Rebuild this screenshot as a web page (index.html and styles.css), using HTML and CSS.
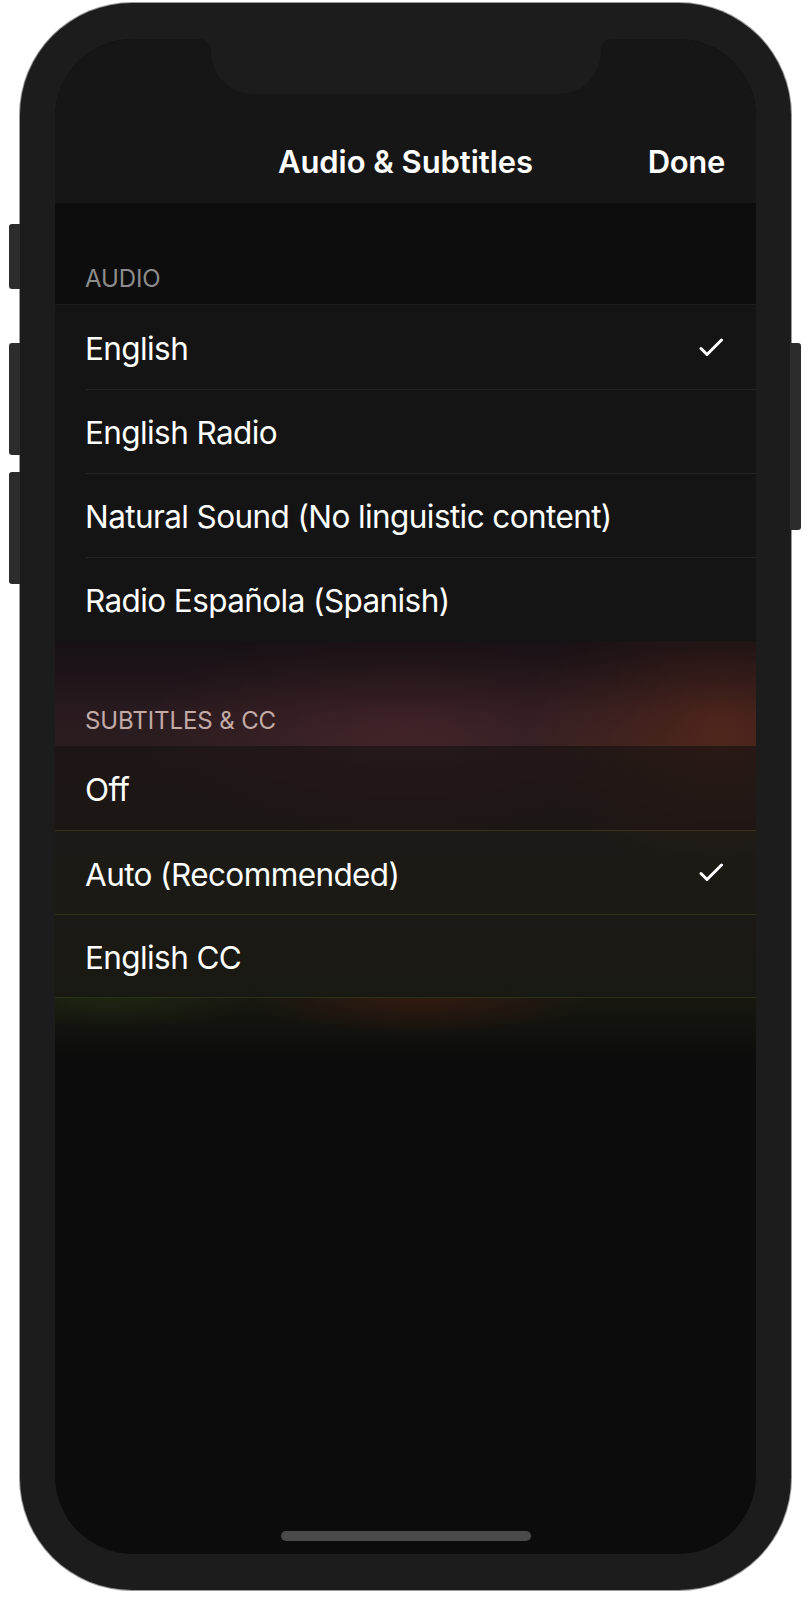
FILE: index.html
```html
<!DOCTYPE html>
<html lang="en">
<head>
<meta charset="utf-8">
<title>Audio &amp; Subtitles</title>
<link rel="stylesheet" href="styles.css">
</head>
<body>
<div class="device">
  <span class="btn btn-mute"></span>
  <span class="btn btn-volup"></span>
  <span class="btn btn-voldown"></span>
  <span class="btn btn-power"></span>
  <div class="screen">
    <div class="notch"></div>
    <header class="nav">
      <div class="nav-bar">
        <span class="nav-title">Audio &amp; Subtitles</span>
        <span class="nav-done">Done</span>
      </div>
    </header>

    <section class="group group-audio">
      <div class="group-header"><span>AUDIO</span></div>
      <ul class="list">
        <li class="row"><span class="label">English</span><svg class="check" viewBox="0 0 24 19" width="24" height="19"><path d="M2 10.5 L8 16.5 L22.5 2" fill="none" stroke="#fff" stroke-width="3" stroke-linecap="round" stroke-linejoin="round"/></svg></li>
        <li class="row"><span class="label">English Radio</span></li>
        <li class="row"><span class="label">Natural Sound (No linguistic content)</span></li>
        <li class="row"><span class="label">Radio Española (Spanish)</span></li>
      </ul>
    </section>

    <section class="group group-subs">
      <div class="group-header"><span>SUBTITLES &amp; CC</span></div>
      <ul class="list">
        <li class="row row-off"><span class="label">Off</span></li>
        <li class="row row-auto"><span class="label">Auto (Recommended)</span><svg class="check" viewBox="0 0 24 19" width="24" height="19"><path d="M2 10.5 L8 16.5 L22.5 2" fill="none" stroke="#fff" stroke-width="3" stroke-linecap="round" stroke-linejoin="round"/></svg></li>
        <li class="row row-cc"><span class="label">English CC</span></li>
      </ul>
    </section>
    <div class="glow"></div>

    <div class="spacer"></div>
    <div class="home-bar"><span class="home-indicator"></span></div>
  </div>
</div>
</body>
</html>
```

FILE: styles.css
```css
* { box-sizing: border-box; }
html, body { margin: 0; padding: 0; background: #ffffff; }
body {
  font-family: Inter, "Noto Sans", "Liberation Sans", sans-serif;
  color: #ffffff;
  width: 810px;
  height: 1600px;
  overflow: hidden;
}

.device {
  position: relative;
  margin: 3px 0 0 19.5px;
  width: 771px;
  height: 1587px;
  border-radius: 112px;
  background: #1c1c1c;
  box-shadow: 0 0 0 1px #9a9a9a;
  padding: 36px 35px 36px 35.5px;
}

.btn {
  position: absolute;
  background: #2c2c2c;
  width: 11px;
}
.btn-mute   { left: -10.5px; top: 221px; height: 65px; border-radius: 3px 0 0 3px; }
.btn-volup  { left: -10.5px; top: 340px; height: 112px; border-radius: 3px 0 0 3px; }
.btn-voldown{ left: -10.5px; top: 469px; height: 112px; border-radius: 3px 0 0 3px; }
.btn-power  { right: -10.5px; top: 340px; height: 187px; border-radius: 0 3px 3px 0; }

.screen {
  position: relative;
  width: 701px;
  height: 1515px;
  border-radius: 78px;
  overflow: hidden;
  background: #0c0c0c;
  display: flex;
  flex-direction: column;
}

.notch {
  position: absolute;
  top: 0;
  left: 156px;
  width: 390px;
  height: 55px;
  background: #1c1c1c;
  border-radius: 0 0 42px 42px;
  z-index: 2;
}
.notch::before, .notch::after {
  content: "";
  position: absolute;
  top: 0;
  width: 10px;
  height: 10px;
}
.notch::before {
  left: -10px;
  background: radial-gradient(circle at 0 100%, transparent 9.5px, #1c1c1c 10px);
}
.notch::after {
  right: -10px;
  background: radial-gradient(circle at 100% 100%, transparent 9.5px, #1c1c1c 10px);
}

.nav {
  background: #161616;
  height: 164px;
  padding-top: 82px;
  flex: none;
}
.nav-bar {
  position: relative;
  height: 80px;
  display: flex;
  align-items: center;
  justify-content: center;
  font-weight: 600;
  font-size: 31px;
  letter-spacing: -0.05px;
}
.nav-done {
  position: absolute;
  right: 31px;
  top: 50%;
  transform: translateY(-50%);
  letter-spacing: -0.3px;
}

.group { flex: none; }
.group-header {
  height: 102px;
  display: flex;
  align-items: flex-end;
  padding: 0 0 13px 30px;
  font-size: 24px;
  line-height: 24px;
  letter-spacing: -0.1px;
  color: #8c8c8c;
  background: #0d0d0d;
  border-bottom: 1px solid #1d1d1d;
}
.list { list-style: none; margin: 0; padding: 0; }
.row {
  position: relative;
  height: 84px;
  display: flex;
  align-items: center;
  justify-content: space-between;
  padding: 3px 33px 0 30px;
  font-size: 31.5px;
  letter-spacing: -0.6px;
  background: #141414;
}
.group-audio .row + .row::before {
  content: "";
  position: absolute;
  top: 0;
  left: 31px;
  right: 0;
  height: 1px;
  background: #232323;
}
.check { flex: none; margin-top: -3px; }

.group-subs {
  background:
    radial-gradient(ellipse 40% 60% at 95% 22%, rgba(120, 50, 25, 0.55), transparent 70%),
    radial-gradient(ellipse 50% 40% at 50% 25%, rgba(95, 45, 50, 0.5), transparent 75%),
    linear-gradient(180deg, #1a1418 0%, #2e1d22 20%, #241c1b 40%, #1d1b17 70%, #1b1a15 100%);
}
.group-subs .group-header {
  height: 105px;
  background:
    linear-gradient(180deg, rgba(20, 14, 18, 0.55) 0%, rgba(0, 0, 0, 0) 100%);
  border-bottom: none;
  color: #c2aaa6;
}
.group-subs .row { background: transparent; }
.row-off  { background: rgba(26, 20, 19, 0.7) !important; }
.row-auto { background: rgba(26, 25, 20, 0.55) !important; border-top: 1px solid #3a3019; }
.row-cc   { background: rgba(25, 25, 20, 0.6) !important; border-top: 1px solid #2e3219; border-bottom: 1px solid #2a3117; }

.glow {
  flex: none;
  height: 60px;
  background:
    radial-gradient(ellipse 30% 80% at 52% 0%, rgba(70, 28, 16, 0.55), transparent 80%),
    radial-gradient(ellipse 25% 70% at 8% 0%, rgba(35, 48, 18, 0.55), transparent 80%),
    linear-gradient(180deg, #181810 0%, #0c0c0c 100%);
}

.spacer { flex: 1; }
.home-bar {
  flex: none;
  height: 40px;
  display: flex;
  justify-content: center;
}
.home-indicator {
  width: 250px;
  height: 10px;
  border-radius: 5px;
  background: #4a4a4a;
  margin-top: 17px;
}
```
